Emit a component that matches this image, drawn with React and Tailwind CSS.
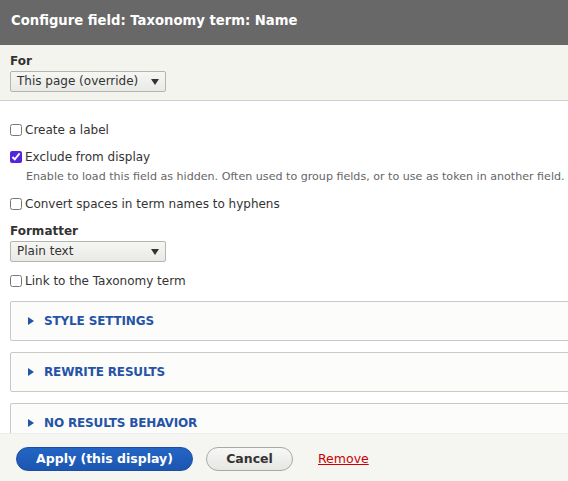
import { useState } from 'react'

const font = { fontFamily: '"DejaVu Sans", Verdana, sans-serif' }

function Caret({ className = '' }) {
  return (
    <svg viewBox="0 0 8 6" className={className} aria-hidden="true">
      <path d="M0 0 L8 0 L4 6 Z" fill="currentColor" />
    </svg>
  )
}

function Select({ value }) {
  return (
    <div className="flex items-center justify-between w-[156px] h-[21px] rounded-[2px] border border-[#b4b4b0] bg-gradient-to-b from-[#f6f6f3] to-[#e9e9e6] pl-[6px] pr-[6px] text-[12px] leading-[19px] text-[#333] cursor-pointer">
      <span>{value}</span>
      <Caret className="w-[8px] h-[6px] text-[#333]" />
    </div>
  )
}

function Check({ label, checked, onChange, className = '' }) {
  return (
    <label className={`flex items-center h-[18px] text-[12px] leading-[18px] text-[#333] ${className}`}>
      <input
        type="checkbox"
        checked={checked}
        onChange={onChange}
        className="w-[12px] h-[12px] m-0 mr-[3px] accent-[#5224e0]"
      />
      {label}
    </label>
  )
}

function Details({ title, className = '' }) {
  return (
    <div className={`flex items-center h-[40px] w-[620px] shrink-0 rounded-[2px] border border-[#c8c8c4] bg-[#fcfcfa] pl-[17px] gap-[10px] ${className}`}>
      <svg viewBox="0 0 6 8" className="w-[6px] h-[8px] text-[#2553a8]" aria-hidden="true">
        <path d="M0 0 L6 4 L0 8 Z" fill="currentColor" />
      </svg>
      <span className="text-[12px] font-bold uppercase text-[#2553a8] tracking-[-0.15px]">{title}</span>
    </div>
  )
}

export default function App() {
  const [opts, setOpts] = useState({ label: false, exclude: true, hyphens: false, link: false })
  const toggle = (key) => () => setOpts((o) => ({ ...o, [key]: !o[key] }))

  return (
    <div style={font} className="w-[568px] h-[481px] overflow-hidden flex flex-col bg-white">
      <header className="h-[45px] shrink-0 bg-[#686868] px-[11px] pt-[12px]">
        <h1 className="text-[13.2px] leading-[18px] font-bold text-white">Configure field: Taxonomy term: Name</h1>
      </header>

      <div className="flex-1 overflow-hidden flex flex-col">
        <section className="bg-[#f3f4ee] border-b border-[#cfcfcb] px-[10px] pt-[7px] pb-[8px]">
          <div className="text-[12px] leading-[18px] font-bold text-[#333]">For</div>
          <div className="mt-[1px]">
            <Select value="This page (override)" />
          </div>
        </section>

        <div className="pl-[10px] pt-[20px] flex flex-col">
          <Check label="Create a label" checked={opts.label} onChange={toggle('label')} />
          <Check label="Exclude from display" checked={opts.exclude} onChange={toggle('exclude')} className="mt-[9px]" />
          <p className="mt-[3px] pl-[16px] text-[11.1px] leading-[16px] text-[#666] whitespace-nowrap">
            Enable to load this field as hidden. Often used to group fields, or to use as token in another field.
          </p>
          <Check label="Convert spaces in term names to hyphens" checked={opts.hyphens} onChange={toggle('hyphens')} className="mt-[10px]" />

          <div className="mt-[9px] text-[12px] leading-[18px] font-bold text-[#333]">Formatter</div>
          <div className="mt-[1px]">
            <Select value="Plain text" />
          </div>
          <Check label="Link to the Taxonomy term" checked={opts.link} onChange={toggle('link')} className="mt-[10px]" />

          <Details title="Style settings" className="mt-[11px]" />
          <Details title="Rewrite results" className="mt-[11px]" />
          <Details title="No results behavior" className="mt-[11px]" />
        </div>
      </div>

      <footer className="h-[48px] shrink-0 bg-[#f5f5f2] border-t border-[#ececea] pl-[16px] pt-[13px] flex items-start">
        <button className="h-[24px] w-[177px] rounded-full border border-[#1a4fa3] bg-gradient-to-b from-[#2365c4] to-[#1c56b0] text-white text-[12.5px] font-bold">
          Apply (this display)
        </button>
        <button className="ml-[13px] h-[24px] w-[87px] rounded-full border border-[#a8a8a8] bg-gradient-to-b from-[#f7f7f5] to-[#e6e6e3] text-[#333] text-[12.5px] font-bold">
          Cancel
        </button>
        <a href="#" className="ml-[25px] leading-[24px] text-[12.5px] text-[#c00] underline">Remove</a>
      </footer>
    </div>
  )
}
